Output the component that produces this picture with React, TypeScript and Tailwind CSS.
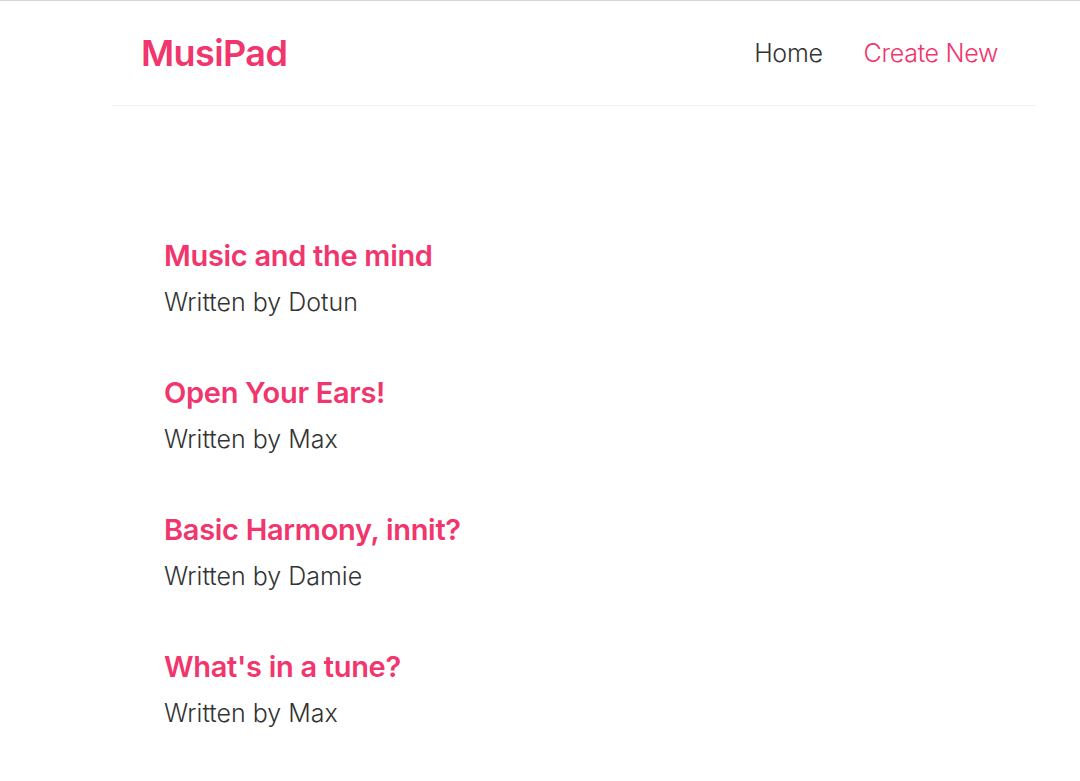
import React from 'react'

const posts = [
  { title: 'Music and the mind', author: 'Dotun' },
  { title: 'Open Your Ears!', author: 'Max' },
  { title: 'Basic Harmony, innit?', author: 'Damie' },
  { title: "What's in a tune?", author: 'Max' },
]

export default function App() {
  return (
    <div className="min-h-screen bg-white border-t border-[#d4d4d4] font-['Inter','Lato',sans-serif] text-[#333]">
      {/* Navbar */}
      <nav className="ml-[112px] w-[924px] h-[105px] flex items-center justify-between pl-[29px] pr-[38px] border-b border-[#f2f2f2]">
        <h1 className="text-[36px] font-semibold text-[#f1356d] leading-none tracking-[-0.6px]">MusiPad</h1>
        <div className="flex items-center gap-[41px] pt-[1px] text-[25px] font-light leading-none tracking-[-0.3px]">
          <a className="text-[#333]">Home</a>
          <a className="text-[#f1356d]">Create New</a>
        </div>
      </nav>

      {/* Blog list */}
      <div className="ml-[164px] pt-[132px] flex flex-col">
        {posts.map((p) => (
          <div key={p.title} className="h-[137px]">
            <h2 className="text-[29px] leading-[36px] font-semibold tracking-[-0.3px] text-[#f1356d]">{p.title}</h2>
            <p className="mt-[12px] text-[25px] leading-[32px] font-light text-[#333]">Written by {p.author}</p>
          </div>
        ))}
      </div>
    </div>
  )
}
